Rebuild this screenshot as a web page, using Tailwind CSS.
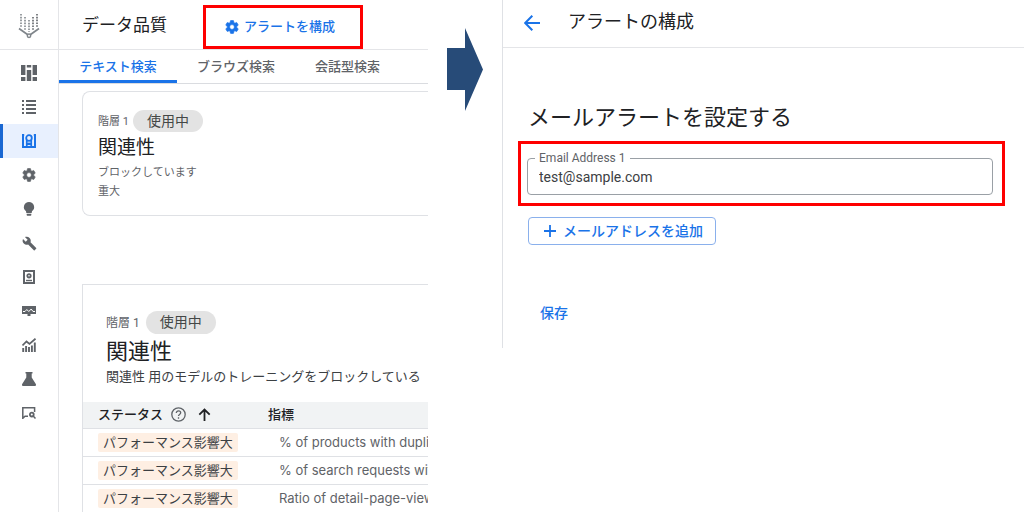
<!DOCTYPE html>
<html lang="ja">
<head>
    <meta charset="UTF-8">
    <meta name="viewport" content="width=device-width, initial-scale=1.0">
    <title>データ品質 - アラートの構成</title>
    <script src="https://cdn.jsdelivr.net/npm/@tailwindcss/browser@4"></script>
</head>
<body class="bg-white text-[#202124] font-['Roboto','Noto_Sans_CJK_JP',sans-serif]">
    <div class="flex h-screen min-h-[512px] overflow-hidden">

        <!-- Data quality screen -->
        <div class="flex w-[41.8%] shrink-0 overflow-hidden">
            <nav aria-label="メニュー" class="w-[59px] shrink-0 border-r border-[#e4e5e8] text-[#5f6368]">
                <div class="h-[50px] pt-[2px] flex items-center justify-center border-b border-[#e4e5e8]">
                    <svg class="w-[22px] h-[26px]" viewBox="0 0 22 26" fill="none" stroke="#80868b" aria-hidden="true">
                        <g stroke-width="1.6" stroke-dasharray="1.6 1.2">
                            <path d="M3 1v13M7 4v13M11 7v12" />
                            <path d="M15 4v13M19 1v13" stroke="#5f6368" />
                        </g>
                        <path d="M1 15.5l8.8 6.300M21 15.5l-8.8 6.300" stroke-width="1.7" />
                        <circle cx="11" cy="22.8" r="1.7" stroke-width="1.5" />
                    </svg>
                </div>
                <div class="pt-[6px] flex flex-col">
                    <a href="#" aria-label="ダッシュボード" class="h-[34px] shrink-0 flex items-center justify-center">
                        <svg class="w-4 h-4" viewBox="0 0 16 16" fill="currentColor"><path d="M0 0h4.400v10H0zM0 12h4.400v4H0zM5.800 0h4.400v2.600H5.800zM5.800 5h4.400v11H5.800zM11.600 0H16v10h-4.400zM11.600 12H16v4h-4.400z" /></svg>
                    </a>
                    <a href="#" aria-label="リスト" class="h-[34px] shrink-0 flex items-center justify-center">
                        <svg class="w-[14px] h-[14px]" viewBox="0 0 14 14" fill="currentColor"><path d="M0 0h2v2H0zM4 0h10v2H4zM0 4h2v2H0zM4 4h10v2H4zM0 8h2v2H0zM4 8h10v2H4zM0 12h2v2H0zM4 12h10v2H4z" /></svg>
                    </a>
                    <a href="#" aria-label="データ品質" aria-current="page" class="h-[34px] shrink-0 flex items-center justify-center bg-[#e8f0fe] text-[#1a73e8] border-l-[3px] border-[#1967d2] pr-[3px]">
                        <svg class="w-[14px] h-[14px]" viewBox="0 0 14 14" fill="none" stroke="currentColor" stroke-width="1.8"><path d="M2.200 1H1v12h12V1h-1.200" stroke-width="2" /><circle cx="7" cy="4" r="2.800" /><path d="M4.800 6v5L7 9.400 9.200 11V6" /></svg>
                    </a>
                    <a href="#" aria-label="設定" class="h-[34px] shrink-0 flex items-center justify-center">
                        <svg class="w-4 h-4" viewBox="0 0 24 24" fill="currentColor" stroke="currentColor"><path d="M19.14 12.94c.04-.3.06-.61.06-.94s-.02-.64-.07-.94l2.03-1.58a.49.49 0 00.12-.61l-1.92-3.32a.49.49 0 00-.59-.22l-2.39.96a7 7 0 00-1.62-.94l-.36-2.54a.48.48 0 00-.48-.41h-3.84a.47.47 0 00-.47.41l-.36 2.54c-.59.24-1.13.57-1.62.94l-2.39-.96a.48.48 0 00-.59.22L2.74 8.87a.47.47 0 00.12.61l2.03 1.58a6 6 0 000 1.88l-2.03 1.58a.49.49 0 00-.12.61l1.92 3.32c.12.22.37.29.59.22l2.39-.96c.5.38 1.03.7 1.62.94l.36 2.54c.05.24.24.41.48.41h3.84c.24 0 .44-.17.47-.41l.36-2.54a7 7 0 001.62-.94l2.39.96c.22.08.47 0 .59-.22l1.92-3.32a.47.47 0 00-.12-.61zM12 15.6a3.6 3.6 0 110-7.2 3.6 3.6 0 010 7.2z" /></svg>
                    </a>
                    <a href="#" aria-label="分析情報" class="h-[34px] shrink-0 flex items-center justify-center">
                        <svg class="w-4 h-4" viewBox="0 0 24 24" fill="currentColor"><path d="M8.5 20.5c0 1 .6 1.700 1.500 1.700h4c.9 0 1.500-.7 1.500-1.700v-.9h-7zM12 1.500a7.700 7.700 0 00-4.400 14V17c0 .7.6 1.200 1.200 1.200h6.400c.6 0 1.200-.5 1.200-1.200v-1.500A7.700 7.700 0 0012 1.500z" /></svg>
                    </a>
                    <a href="#" aria-label="ツール" class="h-[34px] shrink-0 flex items-center justify-center">
                        <svg class="w-[15px] h-[15px]" viewBox="0 0 24 24" fill="currentColor"><path d="M22.7 19l-9.1-9.1c.9-2.3.4-5-1.5-6.9-2-2-5-2.4-7.4-1.3L9 6 6 9 1.6 4.7C.4 7.1.9 10.1 2.9 12.1c1.9 1.9 4.6 2.4 6.9 1.5l9.1 9.1c.4.4 1 .4 1.4 0l2.3-2.3c.5-.4.5-1.1.1-1.4z" /></svg>
                    </a>
                    <a href="#" aria-label="モデル" class="h-[34px] shrink-0 flex items-center justify-center">
                        <svg class="w-3 h-[14px]" viewBox="0 0 12 14" fill="none" stroke="currentColor"><path d="M1 1h10v12H1z" stroke-width="2" /><circle cx="6" cy="5.800" r="1.700" stroke-width="1.8" /><path d="M3 10.500h6" stroke-width="1.4" /></svg>
                    </a>
                    <a href="#" aria-label="モニタリング" class="h-[34px] shrink-0 flex items-center justify-center">
                        <svg class="w-[14px] h-[10px]" viewBox="0 0 14 10"><path d="M0 0h14v8H8.500v2h-3V8H0z" fill="currentColor" /><path d="M1 5.500h2l1.800-2 2 2 2.400-2.500 1.800 2.500h2" fill="none" stroke="#fff" stroke-width="1" /></svg>
                    </a>
                    <a href="#" aria-label="アナリティクス" class="h-[34px] shrink-0 flex items-center justify-center">
                        <svg class="w-[14px] h-[14px]" viewBox="0 0 14 14" fill="none" stroke="currentColor"><path d="M1.200 14v-4M4.100 14V8M7 14V9M9.900 14V7.500M12.800 14V4.500" stroke-width="1.9" /><path d="M.5 7.500L4.500 3.500 7.500 6 13.500.7" stroke-width="1.7" /></svg>
                    </a>
                    <a href="#" aria-label="テスト" class="h-[34px] shrink-0 flex items-center justify-center">
                        <svg class="w-[14px] h-[14px]" viewBox="0 0 14 14" fill="currentColor"><path d="M3.500 0h7v1.600H9.700v4L13.800 12c.5.9 0 2-1 2H1.200c-1 0-1.500-1.100-1-2L4.300 5.600v-4H3.500z" /></svg>
                    </a>
                    <a href="#" aria-label="評価" class="h-[34px] shrink-0 flex items-center justify-center">
                        <svg class="w-[14px] h-3" viewBox="0 0 14 12" fill="none" stroke="currentColor"><path d="M6 9.300H3L.8 11.300V.8h11.800V5" stroke-width="1.5" /><circle cx="9.800" cy="7.600" r="1.900" stroke-width="1.8" /><path d="M11.200 9l2.300 2.500" stroke-width="1.5" /></svg>
                    </a>
                </div>
            </nav>

            <main class="flex-1 min-w-0">
                <header class="h-[50px] pl-[23px] pt-[5px] flex items-start border-b border-[#e4e5e8]">
                    <h1 class="text-[17px] leading-10 whitespace-nowrap">データ品質</h1>
                    <div class="ml-9 pl-[18px] w-40 h-11 shrink-0 border-[3px] border-[#fe0000] flex items-center">
                        <button type="button" class="flex items-center gap-1 text-[13px] leading-5 font-medium text-[#1a73e8] whitespace-nowrap">
                            <svg class="w-4 h-4" viewBox="0 0 24 24" fill="currentColor" stroke="currentColor" aria-hidden="true"><path d="M19.14 12.94c.04-.3.06-.61.06-.94s-.02-.64-.07-.94l2.03-1.58a.49.49 0 00.12-.61l-1.92-3.32a.49.49 0 00-.59-.22l-2.39.96a7 7 0 00-1.62-.94l-.36-2.54a.48.48 0 00-.48-.41h-3.84a.47.47 0 00-.47.41l-.36 2.54c-.59.24-1.13.57-1.62.94l-2.39-.96a.48.48 0 00-.59.22L2.74 8.87a.47.47 0 00.12.61l2.03 1.58a6 6 0 000 1.88l-2.03 1.58a.49.49 0 00-.12.61l1.92 3.32c.12.22.37.29.59.22l2.39-.96c.5.38 1.03.7 1.62.94l.36 2.54c.05.24.24.41.48.41h3.84c.24 0 .44-.17.47-.41l.36-2.54a7 7 0 001.62-.94l2.39.96c.22.08.47 0 .59-.22l1.92-3.32a.47.47 0 00-.12-.61zM12 15.6a3.6 3.6 0 110-7.2 3.6 3.6 0 010 7.2z" /></svg>
                            アラートを構成
                        </button>
                    </div>
                </header>

                <div role="tablist" class="h-[34px] flex border-b border-[#dadce0] text-[13px] font-medium text-[#5f6368] whitespace-nowrap">
                    <button type="button" role="tab" aria-selected="true" class="pt-[3px] w-[118px] border-b-[3px] border-[#1a73e8] text-[#1a73e8]">テキスト検索</button>
                    <button type="button" role="tab" aria-selected="false" class="pt-[3px] w-[118px] border-b-[3px] border-transparent">ブラウズ検索</button>
                    <button type="button" role="tab" aria-selected="false" class="pt-[3px] w-[105px] border-b-[3px] border-transparent">会話型検索</button>
                </div>

                <section class="mt-[7px] ml-[23px] pt-[18px] pb-[14px] pl-[15px] border border-r-0 border-[#dfe1e5] rounded-l-lg">
                    <div class="flex items-center gap-1">
                        <span class="pt-[2px] text-[11px] text-[#5f6368]">階層 1</span>
                        <span class="h-[22px] px-[14px] rounded-full bg-[#e3e3e3] text-sm leading-[22px] text-[#444746]">使用中</span>
                    </div>
                    <h2 class="text-[19px] leading-[31px]">関連性</h2>
                    <p class="text-[11px] leading-[19px] text-[#5f6368]">ブロックしています</p>
                    <p class="text-[11px] leading-[19px] text-[#5f6368]">重大</p>
                </section>

                <section class="mt-[68px] ml-[23px] border border-r-0 border-b-0 border-[#dfe1e5] overflow-hidden">
                    <div class="pt-[26px] pb-4 pl-[23px]">
                        <div class="flex items-center gap-[6px]">
                            <span class="text-xs text-[#5f6368]">階層 1</span>
                            <span class="h-[23px] px-[14px] rounded-full bg-[#e3e3e3] text-sm leading-[22px] text-[#444746]">使用中</span>
                        </div>
                        <h2 class="pt-[2px] text-[22px] leading-8">関連性</h2>
                        <p class="text-[13px] leading-[18px] text-[#3c4043] whitespace-nowrap">関連性 用のモデルのトレーニングをブロックしている</p>
                    </div>
                    <table class="w-full table-fixed text-left whitespace-nowrap">
                        <thead>
                            <tr class="h-[26px] bg-[#f1f3f4] border-b border-[#dfe1e5] text-[13px] leading-5">
                                <th class="w-[185px] py-0 pl-[15px] font-medium">
                                    <span class="flex items-center">
                                        ステータス
                                        <svg class="ml-2 w-[15px] h-[15px]" viewBox="0 0 15 15" fill="none" stroke="#5f6368" stroke-width="1.3" aria-hidden="true"><circle cx="7.500" cy="7.500" r="6.700" /><path d="M5.300 6c0-1.300 1-2.200 2.200-2.200S9.700 4.700 9.700 5.800c0 1.500-2.200 1.700-2.200 3.200M7.500 10.300v1.400" /></svg>
                                        <svg class="ml-3 w-[13px] h-[13px]" viewBox="0 0 13 13" fill="none" stroke="#202124" stroke-width="1.8" aria-hidden="true"><path d="M6.500 13V1.500M1.300 6.700l5.200-5.200 5.200 5.200" /></svg>
                                    </span>
                                </th>
                                <th class="py-0 font-medium">指標</th>
                            </tr>
                        </thead>
                        <tbody class="text-[13px] leading-[19px]">
                            <tr class="h-7 border-b border-[#dfe1e5]">
                                <td class="py-0 pl-[15px]"><span class="block w-[140px] px-[5px] rounded-xs bg-[#feefe3] text-[#3c4043]">パフォーマンス影響大</span></td>
                                <td class="py-0 pl-[11px] text-[#5f6368] font-['Inter',sans-serif]">% of products with dupli</td>
                            </tr>
                            <tr class="h-7 border-b border-[#dfe1e5]">
                                <td class="py-0 pl-[15px]"><span class="block w-[140px] px-[5px] rounded-xs bg-[#feefe3] text-[#3c4043]">パフォーマンス影響大</span></td>
                                <td class="py-0 pl-[11px] text-[#5f6368] font-['Inter',sans-serif]">% of search requests wit</td>
                            </tr>
                            <tr class="h-7">
                                <td class="py-0 pl-[15px]"><span class="block w-[140px] px-[5px] rounded-xs bg-[#feefe3] text-[#3c4043]">パフォーマンス影響大</span></td>
                                <td class="py-0 pl-[11px] text-[#5f6368] font-['Inter',sans-serif]">Ratio of detail-page-view</td>
                            </tr>
                        </tbody>
                    </table>
                </section>
            </main>
        </div>

        <!-- Step arrow -->
        <div class="w-[74px] shrink-0 pt-7 pl-[19px]">
            <svg class="w-9 h-[83px]" viewBox="0 0 36 83" fill="#274b78" aria-hidden="true"><path d="M0 20h18V0l18 41.500L18 83V62H0z" /></svg>
        </div>

        <!-- Alert settings screen -->
        <div class="flex-1 min-w-0 h-[348px] border-l border-[#dfe1e5]">
            <header class="h-12 pl-[21px] flex items-center gap-7 border-b border-[#e4e5e8]">
                <a href="#" aria-label="戻る" class="pb-[2px] text-[#1a73e8]">
                    <svg class="w-4 h-4" viewBox="0 0 16 16" fill="none" stroke="currentColor" stroke-width="2"><path d="M16 8H1.500M8.300.8L1.200 8l7.100 7.200" /></svg>
                </a>
                <h1 class="text-lg leading-7 pb-1">アラートの構成</h1>
            </header>

            <form class="pt-[54px]">
                <h2 class="pl-[25px] text-[22px] leading-8">メールアラートを設定する</h2>
                <div class="mt-[7px] ml-[15px] mr-[19px] pt-[14px] pl-[6px] pr-[9px] pb-2 border-[3px] border-[#fe0000]">
                    <div class="relative">
                        <label for="email1" class="absolute left-2 -top-2 px-1 bg-white text-xs leading-4 text-[#5f6368]">Email Address 1</label>
                        <input id="email1" type="email" value="test@sample.com" class="block w-full h-[37px] px-[11px] rounded border border-[#9aa0a6] text-sm text-[#3c4043]">
                    </div>
                </div>
                <button type="button" class="mt-[11px] ml-[25px] h-7 px-3 flex items-center gap-1 rounded border border-[#8ab0ec] text-sm font-medium text-[#1a73e8]">
                    <svg class="m-[3px] w-3 h-3" viewBox="0 0 12 12" fill="none" stroke="currentColor" stroke-width="1.8" aria-hidden="true"><path d="M6 0v12M0 6h12" /></svg>
                    メールアドレスを追加
                </button>
                <button type="submit" class="mt-[58px] ml-[37px] text-sm leading-5 font-medium text-[#1a73e8]">保存</button>
            </form>
        </div>
    </div>
</body>
</html>
